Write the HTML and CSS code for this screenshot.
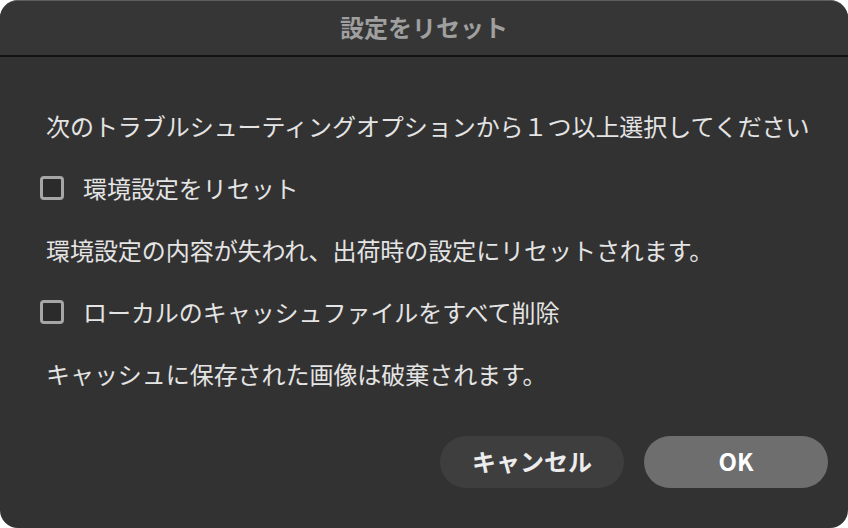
FILE: index.html
```html
<!DOCTYPE html>
<html lang="ja">
<head>
<meta charset="utf-8">
<link rel="stylesheet" href="styles.css">
</head>
<body>
<div class="dialog">
  <div class="header">設定をリセット</div>
  <div class="content">
    <p class="text intro">次のトラブルシューティングオプションから１つ以上選択してください</p>
    <label class="option"><span class="box"></span><span class="text">環境設定をリセット</span></label>
    <p class="text desc">環境設定の内容が失われ、出荷時の設定にリセットされます。</p>
    <label class="option"><span class="box"></span><span class="text">ローカルのキャッシュファイルをすべて削除</span></label>
    <p class="text desc">キャッシュに保存された画像は破棄されます。</p>
  </div>
  <div class="actions">
    <button class="btn cancel">キャンセル</button>
    <button class="btn ok">OK</button>
  </div>
</div>
</body>
</html>
```
FILE: styles.css
```css
html, body {
  margin: 0;
  padding: 0;
  background: #ffffff;
}
body {
  font-family: "Noto Sans CJK JP", "Noto Sans", sans-serif;
}
.dialog {
  width: 848px;
  height: 528px;
  box-sizing: border-box;
  background: #323232;
  border-radius: 18px;
  border-top: 1px solid #5e5e5e;
  overflow: hidden;
  display: flex;
  flex-direction: column;
}
.header {
  height: 56px;
  background: #363636;
  border-bottom: 2px solid #121212;
  color: #9f9f9f;
  font-size: 24px;
  font-weight: 700;
  display: flex;
  align-items: center;
  justify-content: center;
  padding-bottom: 3px;
  box-sizing: border-box;
  flex: none;
}
.content {
  padding: 51px 0 0 46px;
  display: flex;
  flex-direction: column;
  gap: 26px;
  flex: 1;
}
.text {
  color: #e4e4e4;
  font-size: 24px;
  line-height: 36px;
  margin: 0;
  letter-spacing: -0.05px;
}
.option {
  display: flex;
  align-items: center;
  gap: 19px;
  margin-left: -6px;
}
.box {
  width: 24px;
  height: 24px;
  box-sizing: border-box;
  border: 3px solid #a6a6a6;
  border-radius: 4px;
  background: #2b2b2b;
  flex: none;
}
.actions {
  display: flex;
  justify-content: flex-end;
  gap: 20px;
  padding: 0 20px 40px 0;
}
.btn {
  width: 184px;
  height: 52px;
  border: none;
  border-radius: 26px;
  font-family: "Noto Sans CJK JP", "Noto Sans", sans-serif;
  font-size: 24px;
  font-weight: 700;
  padding: 0;
  padding-bottom: 4px;
}
.cancel {
  background: #3e3e3e;
  color: #ececec;
}
.ok {
  background: #6e6e6e;
  color: #ffffff;
}
```
